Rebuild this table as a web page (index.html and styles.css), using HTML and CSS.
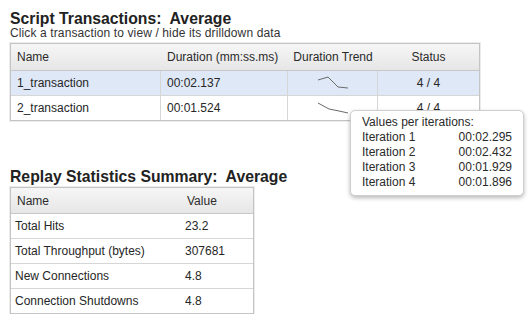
FILE: index.html
```html
<!DOCTYPE html>
<html>
<head>
<meta charset="utf-8">
<link rel="stylesheet" href="styles.css">
</head>
<body>
<div class="page">
  <h1 class="title">Script Transactions:&nbsp; Average</h1>
  <p class="subtitle">Click a transaction to view / hide its drilldown data</p>
  <div class="tx-wrap">
    <table class="grid tx">
      <colgroup>
        <col class="c-name"><col class="c-dur"><col class="c-trend"><col class="c-status">
      </colgroup>
      <thead>
        <tr><th>Name</th><th>Duration (mm:ss.ms)</th><th class="center">Duration Trend</th><th class="center">Status</th></tr>
      </thead>
      <tbody>
        <tr class="selected">
          <td>1_transaction</td><td>00:02.137</td>
          <td class="center"><svg class="spark" width="32" height="24" viewBox="0 0 32 24"><polyline points="1,9 11,6 21,16 31,17" /></svg></td>
          <td class="center">4 / 4</td>
        </tr>
        <tr>
          <td>2_transaction</td><td>00:01.524</td>
          <td class="center"><svg class="spark" width="32" height="24" viewBox="0 0 32 24"><polyline points="1,7 12,13 22,15 31,17" /></svg></td>
          <td class="center">4 / 4</td>
        </tr>
      </tbody>
    </table>
    <div class="tooltip">
      <div class="tip-head">Values per iterations:</div>
      <div class="tip-row"><span>Iteration 1</span><span>00:02.295</span></div>
      <div class="tip-row"><span>Iteration 2</span><span>00:02.432</span></div>
      <div class="tip-row"><span>Iteration 3</span><span>00:01.929</span></div>
      <div class="tip-row"><span>Iteration 4</span><span>00:01.896</span></div>
    </div>
  </div>

  <h1 class="title title2">Replay Statistics Summary:&nbsp; Average</h1>
  <table class="grid stats">
    <colgroup><col class="s-name"><col class="s-val"></colgroup>
    <thead><tr><th>Name</th><th>Value</th></tr></thead>
    <tbody>
      <tr><td>Total Hits</td><td>23.2</td></tr>
      <tr><td>Total Throughput (bytes)</td><td>307681</td></tr>
      <tr><td>New Connections</td><td>4.8</td></tr>
      <tr><td>Connection Shutdowns</td><td>4.8</td></tr>
    </tbody>
  </table>
</div>
</body>
</html>
```

FILE: styles.css
```css
html, body {
  margin: 0;
  padding: 0;
  background: #ffffff;
}
body {
  font-family: "Liberation Sans", Arial, sans-serif;
  font-size: 12px;
  color: #262626;
}
.page {
  padding: 11px 0 0 10px;
}
.title {
  margin: 0;
  font-size: 15.75px;
  line-height: 16px;
  font-weight: bold;
  color: #222222;
  white-space: nowrap;
}
.subtitle {
  margin: 0 0 3px 0;
  font-size: 12px;
  line-height: 13px;
  letter-spacing: 0.12px;
  color: #333333;
}
.tx-wrap {
  position: relative;
}
.grid {
  border-collapse: separate;
  border-spacing: 0;
  border: 1px solid #c4c4c4;
  box-shadow: 0 0 0 1px #ececec;
  table-layout: fixed;
}
.grid th {
  font-weight: normal;
  text-align: left;
  background: linear-gradient(#f6f6f6, #e6e6e6);
  border-bottom: 1px solid #c8c8c8;
  padding: 0 0 0 6px;
  color: #2a2a2a;
  white-space: nowrap;
}
.grid td {
  padding: 0 0 0 6px;
  border-bottom: 1px solid #d6d6d6;
  white-space: nowrap;
}
.grid tbody tr:last-child td {
  border-bottom: none;
}
.grid .center {
  text-align: center;
  padding: 0;
}
.tx {
  width: 468px;
}
.tx th { height: 26px; }
.tx td { height: 24px; border-right: 1px solid #d6d6d6; }
.tx td:last-child { border-right: none; }
.c-name { width: 150px; }
.c-dur { width: 127px; }
.c-trend { width: 90px; }
.c-status { width: 101px; }
.selected td {
  background: #dfe8f7;
}
.spark {
  display: block;
  margin: 0 auto;
}
.spark polyline {
  fill: none;
  stroke: #6a6a6a;
  stroke-width: 1;
}
.tooltip {
  position: absolute;
  left: 340px;
  top: 67px;
  width: 150px;
  padding: 4px 11px 5px 11px;
  background: #ffffff;
  border: 1px solid #cfcfcf;
  border-radius: 5px;
  box-shadow: 0 2px 4px rgba(0, 0, 0, 0.28);
  line-height: 15px;
  color: #2a2a2a;
}
.tip-row {
  display: flex;
  justify-content: space-between;
}
.title2 {
  margin-top: 48px;
  margin-bottom: 2px;
}
.stats {
  width: 242px;
}
.stats th { height: 25px; }
.stats td { height: 24px; padding-left: 4px; }
.stats th:first-child { padding-left: 6px; }
.s-name { width: 170px; }
.s-val { width: 72px; }
```
